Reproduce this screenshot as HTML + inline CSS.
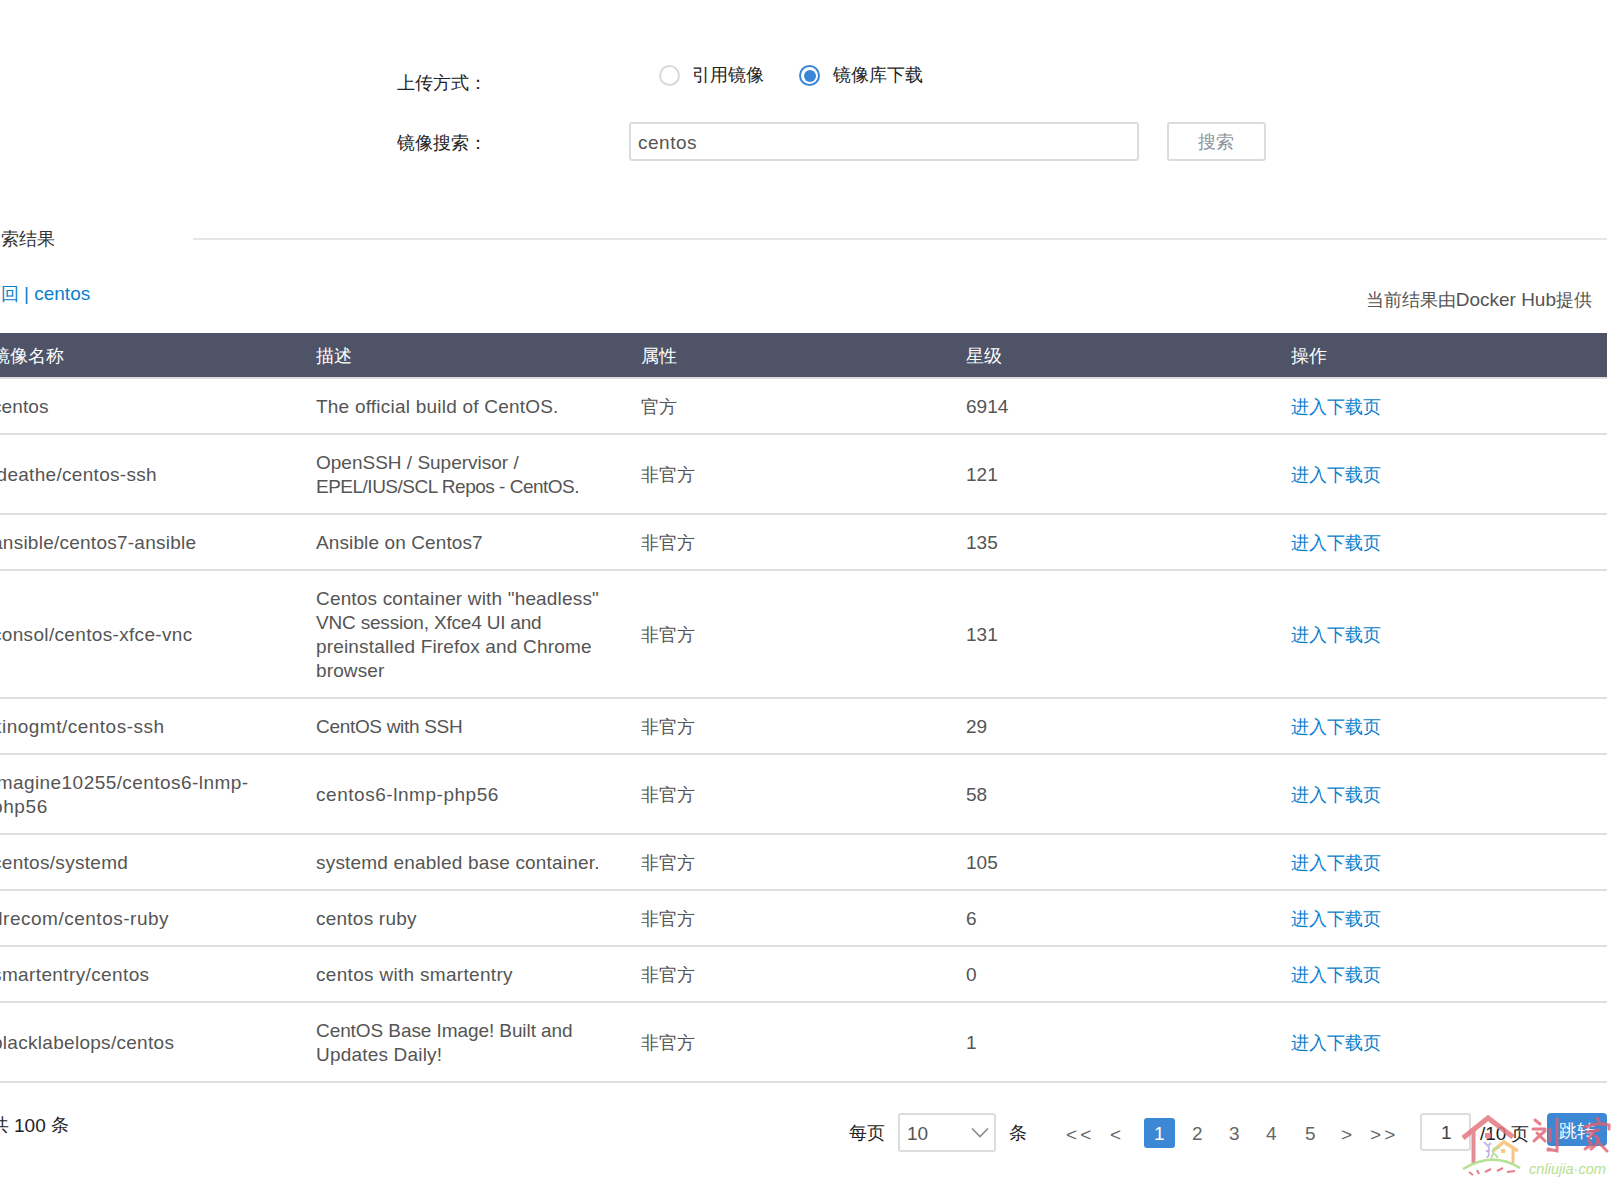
<!DOCTYPE html>
<html><head><meta charset="utf-8">
<style>
html,body{margin:0;padding:0;background:#fff;}
body{width:1615px;height:1180px;overflow:hidden;position:relative;font-family:"Liberation Sans",sans-serif;font-size:18px;color:#555;}
.a{position:absolute;white-space:nowrap;line-height:24px;}
.lbl{color:#222;}
.radio{position:absolute;width:17px;height:17px;border:2px solid #d9d9d9;border-radius:50%;box-sizing:content-box;}
.radio.on{border-color:#3a87d6;}
.radio.on::after{content:"";position:absolute;left:2.5px;top:2.5px;width:12px;height:12px;border-radius:50%;background:#3a87d6;}
.box{position:absolute;border:2px solid #dcdcdc;border-radius:3px;box-sizing:border-box;background:#fff;}
.hline{position:absolute;height:2px;background:#dedede;}
#thead{position:absolute;left:0;top:333px;width:1607px;height:44px;background:#4e5367;}
#thead .a{color:#fff;top:11px;}
.row{position:absolute;left:0;width:1607px;border-bottom:2px solid #dedede;box-sizing:content-box;}
.cell{position:absolute;top:0;bottom:0;display:flex;align-items:center;line-height:24px;white-space:nowrap;}
.link{color:#0a80cc;}
.l{font-size:19px;}
.dn{position:relative;top:1px;}
.c1,.c2,.c4{font-size:19px;}
.pg{position:absolute;top:1122px;line-height:24px;color:#666;font-size:19px;}
</style></head><body>

<!-- form -->
<div class="a lbl" style="left:397px;top:71px;">上传方式：</div>
<div class="radio" style="left:659px;top:65px;"></div>
<div class="a lbl" style="left:692px;top:63px;">引用镜像</div>
<div class="radio on" style="left:799px;top:65px;"></div>
<div class="a lbl" style="left:833px;top:63px;">镜像库下载</div>

<div class="a lbl" style="left:397px;top:131px;">镜像搜索：</div>
<div class="box" style="left:629px;top:122px;width:510px;height:39px;"></div>
<div class="a l" style="left:638px;top:131px;color:#555;letter-spacing:0.5px;">centos</div>
<div class="box" style="left:1167px;top:122px;width:99px;height:39px;"></div>
<div class="a" style="left:1198px;top:130px;color:#8c939d;">搜索</div>

<!-- results header -->
<div class="a" style="left:-17px;top:227px;color:#333;">搜索结果</div>
<div class="hline" style="left:193px;top:238px;width:1414px;height:2px;background:#e6e6e6;"></div>
<div class="a link" style="left:-17px;top:282px;">返回 <span class="l">| centos</span></div>
<div class="a" style="right:23px;top:288px;color:#555;">当前结果由<span class="l">Docker Hub</span>提供</div>

<!-- table -->
<div id="thead">
  <div class="a" style="left:-8px;">镜像名称</div>
  <div class="a" style="left:316px;">描述</div>
  <div class="a" style="left:641px;">属性</div>
  <div class="a" style="left:966px;">星级</div>
  <div class="a" style="left:1291px;">操作</div>
</div>
<div class="hline" style="left:0;top:377px;width:1607px;"></div>

<div id="rows">
<div class="row" style="top:379px;height:54px;">
  <div class="cell c1" style="left:-8px;"><div class="dn"><span style="letter-spacing:0.10px">centos</span></div></div>
  <div class="cell c2" style="left:316px;"><div class="dn"><span style="letter-spacing:0.22px">The official build of CentOS.</span></div></div>
  <div class="cell c3" style="left:641px;"><div class="dn">官方</div></div>
  <div class="cell c4" style="left:966px;"><div class="dn">6914</div></div>
  <div class="cell c5 link" style="left:1291px;"><div class="dn">进入下载页</div></div>
</div>
<div class="row" style="top:435px;height:78px;">
  <div class="cell c1" style="left:-8px;"><div class="dn"><span style="letter-spacing:0.30px">jdeathe/centos-ssh</span></div></div>
  <div class="cell c2" style="left:316px;"><div class="dn">OpenSSH / Supervisor /<br><span style="letter-spacing:-0.50px">EPEL/IUS/SCL Repos - CentOS.</span></div></div>
  <div class="cell c3" style="left:641px;"><div class="dn">非官方</div></div>
  <div class="cell c4" style="left:966px;"><div class="dn">121</div></div>
  <div class="cell c5 link" style="left:1291px;"><div class="dn">进入下载页</div></div>
</div>
<div class="row" style="top:515px;height:54px;">
  <div class="cell c1" style="left:-8px;"><div class="dn"><span style="letter-spacing:0.25px">ansible/centos7-ansible</span></div></div>
  <div class="cell c2" style="left:316px;"><div class="dn"><span style="letter-spacing:0.11px">Ansible on Centos7</span></div></div>
  <div class="cell c3" style="left:641px;"><div class="dn">非官方</div></div>
  <div class="cell c4" style="left:966px;"><div class="dn">135</div></div>
  <div class="cell c5 link" style="left:1291px;"><div class="dn">进入下载页</div></div>
</div>
<div class="row" style="top:571px;height:126px;">
  <div class="cell c1" style="left:-8px;"><div class="dn"><span style="letter-spacing:0.33px">consol/centos-xfce-vnc</span></div></div>
  <div class="cell c2" style="left:316px;"><div class="dn"><span style="letter-spacing:0.17px">Centos container with &quot;headless&quot;</span><br><span style="letter-spacing:-0.19px">VNC session, Xfce4 UI and</span><br><span style="letter-spacing:0.17px">preinstalled Firefox and Chrome</span><br><span style="letter-spacing:0.13px">browser</span></div></div>
  <div class="cell c3" style="left:641px;"><div class="dn">非官方</div></div>
  <div class="cell c4" style="left:966px;"><div class="dn">131</div></div>
  <div class="cell c5 link" style="left:1291px;"><div class="dn">进入下载页</div></div>
</div>
<div class="row" style="top:699px;height:54px;">
  <div class="cell c1" style="left:-8px;"><div class="dn"><span style="letter-spacing:0.49px">kinogmt/centos-ssh</span></div></div>
  <div class="cell c2" style="left:316px;"><div class="dn"><span style="letter-spacing:-0.31px">CentOS with SSH</span></div></div>
  <div class="cell c3" style="left:641px;"><div class="dn">非官方</div></div>
  <div class="cell c4" style="left:966px;"><div class="dn">29</div></div>
  <div class="cell c5 link" style="left:1291px;"><div class="dn">进入下载页</div></div>
</div>
<div class="row" style="top:755px;height:78px;">
  <div class="cell c1" style="left:-8px;"><div class="dn"><span style="letter-spacing:0.44px">imagine10255/centos6-lnmp-</span><br><span style="letter-spacing:0.60px">php56</span></div></div>
  <div class="cell c2" style="left:316px;"><div class="dn"><span style="letter-spacing:0.54px">centos6-lnmp-php56</span></div></div>
  <div class="cell c3" style="left:641px;"><div class="dn">非官方</div></div>
  <div class="cell c4" style="left:966px;"><div class="dn">58</div></div>
  <div class="cell c5 link" style="left:1291px;"><div class="dn">进入下载页</div></div>
</div>
<div class="row" style="top:835px;height:54px;">
  <div class="cell c1" style="left:-8px;"><div class="dn"><span style="letter-spacing:0.30px">centos/systemd</span></div></div>
  <div class="cell c2" style="left:316px;"><div class="dn"><span style="letter-spacing:0.19px">systemd enabled base container.</span></div></div>
  <div class="cell c3" style="left:641px;"><div class="dn">非官方</div></div>
  <div class="cell c4" style="left:966px;"><div class="dn">105</div></div>
  <div class="cell c5 link" style="left:1291px;"><div class="dn">进入下载页</div></div>
</div>
<div class="row" style="top:891px;height:54px;">
  <div class="cell c1" style="left:-8px;"><div class="dn"><span style="letter-spacing:0.51px">drecom/centos-ruby</span></div></div>
  <div class="cell c2" style="left:316px;"><div class="dn"><span style="letter-spacing:0.23px">centos ruby</span></div></div>
  <div class="cell c3" style="left:641px;"><div class="dn">非官方</div></div>
  <div class="cell c4" style="left:966px;"><div class="dn">6</div></div>
  <div class="cell c5 link" style="left:1291px;"><div class="dn">进入下载页</div></div>
</div>
<div class="row" style="top:947px;height:54px;">
  <div class="cell c1" style="left:-8px;"><div class="dn"><span style="letter-spacing:0.38px">smartentry/centos</span></div></div>
  <div class="cell c2" style="left:316px;"><div class="dn"><span style="letter-spacing:0.31px">centos with smartentry</span></div></div>
  <div class="cell c3" style="left:641px;"><div class="dn">非官方</div></div>
  <div class="cell c4" style="left:966px;"><div class="dn">0</div></div>
  <div class="cell c5 link" style="left:1291px;"><div class="dn">进入下载页</div></div>
</div>
<div class="row" style="top:1003px;height:78px;">
  <div class="cell c1" style="left:-8px;"><div class="dn"><span style="letter-spacing:0.29px">blacklabelops/centos</span></div></div>
  <div class="cell c2" style="left:316px;"><div class="dn"><span style="letter-spacing:-0.08px">CentOS Base Image! Built and</span><br><span style="letter-spacing:0.19px">Updates Daily!</span></div></div>
  <div class="cell c3" style="left:641px;"><div class="dn">非官方</div></div>
  <div class="cell c4" style="left:966px;"><div class="dn">1</div></div>
  <div class="cell c5 link" style="left:1291px;"><div class="dn">进入下载页</div></div>
</div>
</div><!--/rows-->

<!-- footer -->
<div class="a" style="left:-9px;top:1113px;color:#222;">共 <span class="l dn">100</span> 条</div>
<div class="a lbl" style="left:849px;top:1121px;">每页</div>
<div class="box" style="left:898px;top:1113px;width:98px;height:39px;"></div>
<div class="a l" style="left:907px;top:1122px;color:#555;">10</div>
<svg style="position:absolute;left:971px;top:1127px;" width="18" height="11" viewBox="0 0 18 11"><polyline points="1,1.5 9,9.5 17,1.5" fill="none" stroke="#8a8a8a" stroke-width="1.6"/></svg>
<div class="a lbl" style="left:1009px;top:1121px;">条</div>
<div class="pg" style="left:1066px;letter-spacing:-1px;top:1123px;">&lt;&nbsp;&lt;</div>
<div class="pg" style="left:1110px;top:1123px;">&lt;</div>
<div style="position:absolute;left:1144px;top:1118px;width:31px;height:30px;background:#3d88d4;border-radius:3px;"></div>
<div class="pg" style="left:1154px;color:#fff;">1</div>
<div class="pg" style="left:1192px;">2</div>
<div class="pg" style="left:1229px;">3</div>
<div class="pg" style="left:1266px;">4</div>
<div class="pg" style="left:1305px;">5</div>
<div class="pg" style="left:1341px;top:1123px;">&gt;</div>
<div class="pg" style="left:1370px;letter-spacing:-1px;top:1123px;">&gt;&nbsp;&gt;</div>
<div class="box" style="left:1420px;top:1113px;width:51px;height:38px;"></div>
<div class="a l" style="left:1441px;top:1121px;color:#444;">1</div>
<div class="a lbl" style="left:1480px;top:1122px;"><span class="l">/10</span> 页</div>
<div style="position:absolute;left:1547px;top:1113px;width:60px;height:33px;background:#3d88d4;border-radius:4px;"></div>
<div class="a" style="left:1559px;top:1119px;color:#fff;">跳转</div>
<!-- watermark -->
<svg style="position:absolute;left:1455px;top:1105px;" width="160" height="75" viewBox="0 0 160 75">
  <g opacity="0.85">
    <polyline points="8,33 33,13 58,32" fill="none" stroke="#e57780" stroke-width="5" stroke-linejoin="miter"/>
    <line x1="18.5" y1="24" x2="18.5" y2="58" stroke="#e07a82" stroke-width="4"/>
    <rect x="30" y="28" width="6" height="5" fill="#e57780"/>
    <polyline points="38,46 49,37 63,46" fill="none" stroke="#f8c070" stroke-width="3.5"/>
    <line x1="58" y1="44" x2="58" y2="58" stroke="#f8b878" stroke-width="3"/>
    <rect x="46" y="44" width="4" height="4" fill="#f8c070"/>
    <path d="M29,37 l4,4 l3,-3 M33,41 c3,3 -1,6 1,9 l-2,3 M35,46 l-4,0" fill="none" stroke="#c0a8e0" stroke-width="1.8"/>
    <path d="M45,43 c-6,-2 -9,3 -6,6 c-3,1 -2,3 -3,5 M40,49 l3,4" fill="none" stroke="#a8d890" stroke-width="1.8"/>
    <path d="M8,64 Q38,46 65,63" fill="none" stroke="#a8dc80" stroke-width="2.5"/>
    <path d="M14,67 l4,3 M22,65 l2,4 M30,67 l6,-3 M42,66 l6,-3 M52,67 l8,-1" fill="none" stroke="#e06a78" stroke-width="2"/>
  </g>
  <g fill="none" stroke="#e06070" stroke-width="3" opacity="0.8" stroke-linecap="round">
    <path d="M80,15 l5,4 M78,24 l12,0 M79,36 q6,-6 11,-10 M82,28 l8,8"/>
    <path d="M102,14 l0,32 l-9,-2 M93,45 l5,0 M95,24 l0,12"/>
    <path d="M142,13 l2,3 M130,22 q12,-5 24,-2 l0,4 M132,27 l12,-2 M138,28 q-8,8 -2,10 M140,31 q8,4 -4,13 M142,36 l10,10 M130,44 l6,-4"/>
  </g>
  <text x="74" y="69" font-family="Liberation Sans" font-style="italic" font-size="14.5" fill="#b8e090" textLength="77" lengthAdjust="spacingAndGlyphs">cnliujia·com</text>
</svg>
</body></html>
